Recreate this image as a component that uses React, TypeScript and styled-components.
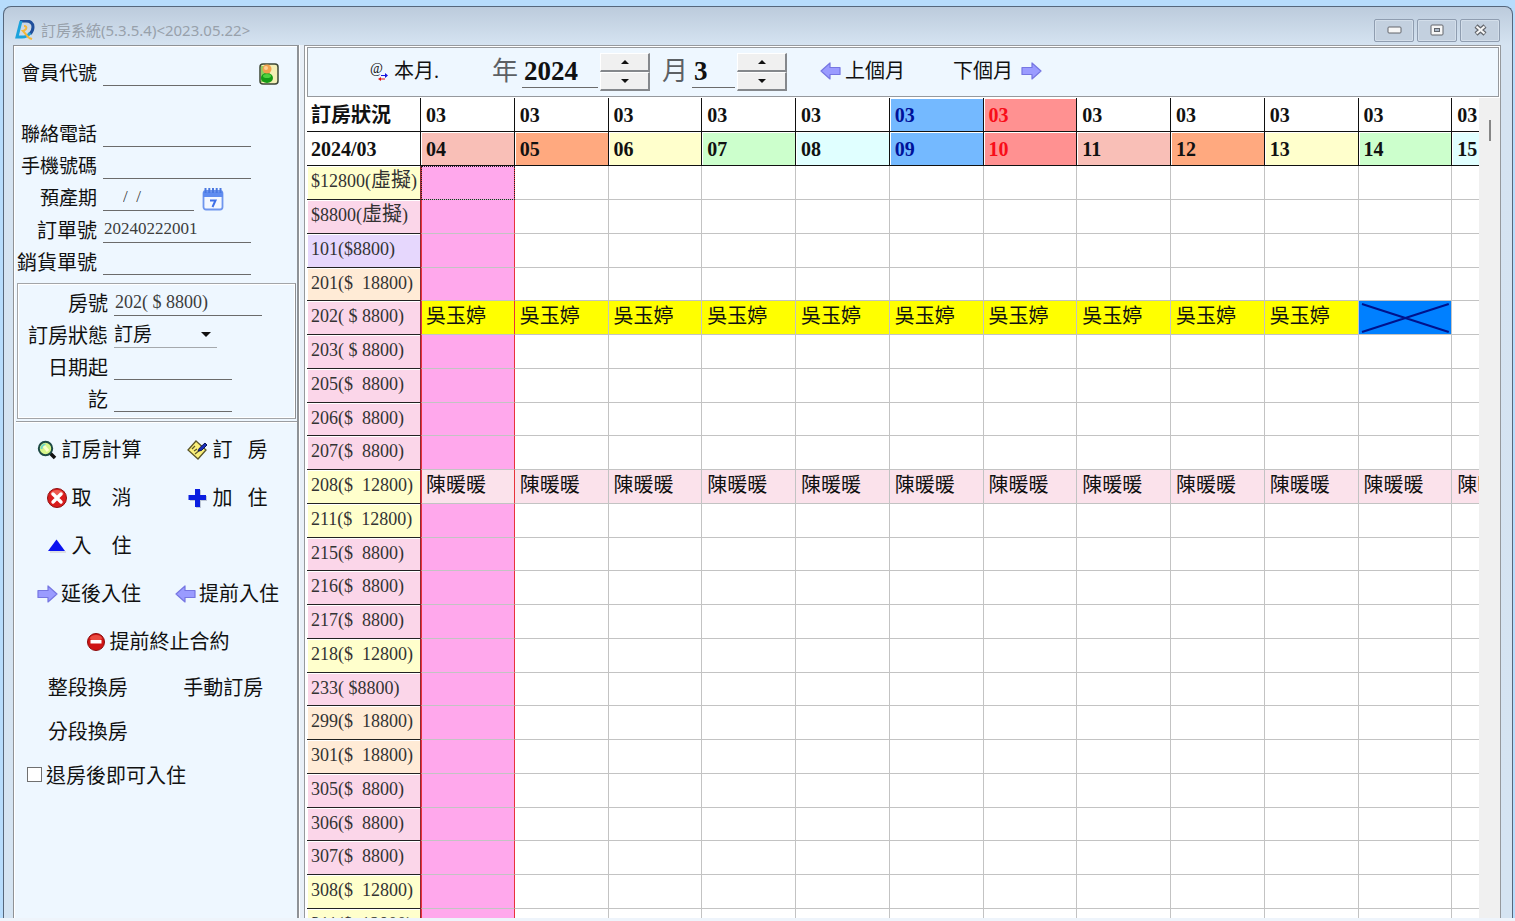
import React from "react";
import styled, { createGlobalStyle, css } from "styled-components";

const SERIF = '"Liberation Serif", "Noto Sans CJK TC", serif';

const GlobalStyle = createGlobalStyle`
  *, *::before, *::after { box-sizing: border-box; }
  body { margin: 0; font-family: ${SERIF}; font-size: 20px; color: #111; }
  button, input, select { font: inherit; color: inherit; margin: 0; padding: 0; border: 0; border-radius: 0; background: none; outline: none; }
  svg { display: block; flex: none; }
`;

/* ---------- window frame ---------- */

const Desktop = styled.div`
  height: 100vh;
  overflow: hidden;
  display: flex;
  flex-direction: column;
  padding: 6px 2px 0 3px;
  background: #b7dcfc;
`;

const Window = styled.main`
  flex: 1;
  min-height: 0;
  display: flex;
  flex-direction: column;
  border: 1px solid #56677c;
  border-bottom: 0;
  border-radius: 8px 8px 0 0;
  background: linear-gradient(#bccbdc 0, #d5e3f1 38px, #d5e4f2 100%);
`;

const BottomStrip = styled.div`
  height: 3px;
  margin: 0 -2px 0 -3px;
  background: #eef4fb;
`;

const TitleBar = styled.header`
  height: 38px;
  flex: none;
  display: flex;
  align-items: center;
  padding: 8px 12px 0 11px;
`;

const Title = styled.h1`
  flex: 1;
  margin: 0 0 0 6px;
  font: 400 15px/20px "Noto Sans", "Noto Sans CJK TC", sans-serif;
  color: #98a1ab;
`;

const WindowControls = styled.div`
  display: flex;
  gap: 3px;
`;

const WindowButton = styled.button`
  width: 40px;
  height: 23px;
  display: flex;
  align-items: center;
  justify-content: center;
  border: 1px solid #8f9db0;
  border-radius: 2px;
  box-shadow: inset 0 0 0 1px #d3deea;
  background: #c3d0df;
`;

const Body = styled.div`
  flex: 1;
  min-height: 0;
  display: flex;
  padding: 0 11px 0 9px;
`;

/* ---------- left form ---------- */

const Sidebar = styled.aside`
  width: 286px;
  flex: none;
  overflow: hidden;
  border: solid #8f9296;
  border-width: 1px 2px 0 1px;
  box-shadow: inset 1px 1px #fff;
  background: #eef7ff;
`;

const Fields = styled.div`
  padding-top: 8px;
`;

const Field = styled.div<{ $spaced?: boolean }>`
  height: 32px;
  display: flex;
  align-items: flex-end;
  gap: 6px;
  margin-bottom: ${(p) => (p.$spaced ? "29px" : "0")};
`;

const FieldLabel = styled.label<{ $width: number; $compact?: boolean }>`
  width: ${(p) => p.$width}px;
  flex: none;
  font-size: ${(p) => (p.$compact ? 19 : 20)}px;
  line-height: 24px;
  text-align: right;
  white-space: nowrap;
`;

const underline = css`
  height: 26px;
  border-bottom: 1px solid #6b6b6b;
`;

const LineInput = styled.input<{ $width: number; $large?: boolean }>`
  ${underline}
  width: ${(p) => p.$width}px;
  padding: 0 1px 1px;
  font-size: ${(p) => (p.$large ? 18 : 17)}px;
  color: #3c3c3c;
`;

const DateInput = styled(LineInput)`
  padding-left: 20px;
  white-space: pre;
`;

const IconButton = styled.button`
  width: 22px;
  height: 24px;
  margin-left: 2px;
  cursor: pointer;
`;

const RoomBox = styled.fieldset`
  margin: 8px 1px 0 3px;
  padding: 0 0 6px;
  min-width: 0;
  border: 1px solid #a3a5a8;
  border-right-color: #8b8e92;
  box-shadow: inset -1px -1px #fff, inset 1px 1px #fff;
`;

const SelectWrap = styled.div`
  ${underline}
  width: 103px;
  display: grid;
  align-items: center;
  border-bottom-color: #a5a9ad;

  > * { grid-area: 1 / 1; }
  > svg { justify-self: end; margin-right: 6px; pointer-events: none; }
`;

const StatusSelect = styled.select`
  width: 100%;
  height: 24px;
  appearance: none;
  font-size: 19px;
  line-height: 24px;
`;

const Divider = styled.hr`
  height: 2px;
  margin: 2px 0 3px 2px;
  border: 0;
  border-top: 1px solid #9a9da1;
  background: #fff;
`;

const ActionGrid = styled.div<{ $rowHeight: number; $inset?: boolean }>`
  display: grid;
  grid-template-columns: 1fr 1fr;
  grid-auto-rows: ${(p) => p.$rowHeight}px;
  padding: 0 ${(p) => (p.$inset ? 6 : 1)}px 0 6px;
  justify-items: center;
  align-items: center;
`;

const ActionButton = styled.button<{ $wide?: boolean; $gap?: number }>`
  display: flex;
  align-items: center;
  gap: ${(p) => p.$gap ?? 5}px;
  grid-column: ${(p) => (p.$wide ? "1 / -1" : "auto")};
  font-size: 20px;
  line-height: 28px;
  white-space: pre;
  cursor: pointer;
`;

const Spacer = styled.span``;

const CheckRow = styled.label`
  height: 40px;
  display: flex;
  align-items: center;
  gap: 4px;
  padding-left: 13px;
  white-space: nowrap;
`;

const CheckBox = styled.input`
  appearance: none;
  width: 15px;
  height: 15px;
  border: 1px solid #707070;
  background: #fff;
  &:checked { background: #3c6fd6; }
`;

/* ---------- schedule ---------- */

const Splitter = styled.div`
  width: 5px;
  flex: none;
  background: linear-gradient(90deg, #fff 1px, #e9f0f8 1px);
`;

const Schedule = styled.section`
  flex: 1;
  min-width: 0;
  display: flex;
  flex-direction: column;
  padding: 1px 0 0 2px;
  border: solid #96999d;
  border-width: 1px 1px 0;
  background: #fff;
`;

const Toolbar = styled.div`
  height: 50px;
  flex: none;
  display: flex;
  align-items: center;
  gap: 48px;
  margin: 0 1px 1px 0;
  padding-left: 62px;
  border: 1px solid #96999d;
  background: #eef7ff;
`;

const ToolCluster = styled.div`
  display: flex;
  align-items: center;
  gap: 33px;
`;

const DatePick = styled.div`
  display: flex;
  align-items: center;
  gap: 12px;
`;

const Stepper = styled.div`
  display: flex;
  align-items: center;
  gap: 2px;
`;

const StepLabel = styled.label`
  width: 28px;
  font-size: 26px;
  line-height: 32px;
  color: #5c6064;
`;

const StepInput = styled.input<{ $width: number }>`
  width: ${(p) => p.$width}px;
  height: 32px;
  padding: 0 2px;
  border-bottom: 1px solid #6b6b6b;
  font-size: 27px;
  font-weight: 700;
  color: #111;
`;

const StepButtons = styled.div`
  width: 50px;
  display: grid;
  grid-auto-rows: 19px;
`;

const StepButton = styled.button`
  display: flex;
  align-items: center;
  justify-content: center;
  border: solid;
  border-width: 1px 2px 2px 1px;
  border-color: #fff #85888c #85888c #fff;
  background: #f0f0f0;
`;

const ToolButton = styled.button<{ $minWidth?: number; $gap?: number }>`
  min-width: ${(p) => p.$minWidth ?? 0}px;
  display: flex;
  align-items: center;
  gap: ${(p) => p.$gap ?? 4}px;
  padding-bottom: 3px;
  font-size: 20px;
  line-height: 28px;
  white-space: nowrap;
  cursor: pointer;
`;

const GridArea = styled.div`
  flex: 1;
  min-height: 0;
  display: flex;
`;

const GridViewport = styled.div`
  flex: 1;
  min-width: 0;
  overflow: hidden;
`;

const ScrollTrack = styled.div`
  width: 21px;
  flex: none;
  padding: 22px 0 0 10px;
  background: #f0f0f0;
`;

const ScrollThumb = styled.div`
  width: 2px;
  height: 21px;
  background: #868686;
`;

const RoomTable = styled.table`
  width: 100%;
  table-layout: fixed;
  border-collapse: separate;
  border-spacing: 0;
  line-height: 26px;
`;

const LabelCol = styled.col`
  width: 114px;
`;

const DayCol = styled.col`
  width: 8%;
`;

const HeadRow = styled.tr`
  height: 34px;
`;

const RoomRow = styled.tr`
  height: 34px;
  &:nth-child(4n) { height: 33px; }
`;

const cellBase = css`
  padding: 0 0 0 5px;
  overflow: hidden;
  text-align: left;
  white-space: pre;
`;

const HeadCell = styled.th<{ $bg?: string; $fg?: string }>`
  ${cellBase}
  border: solid #111;
  border-width: 0 1px 1px 0;
  box-shadow: inset 1px 1px #fff;
  background: ${(p) => p.$bg ?? "#fff"};
  color: ${(p) => p.$fg ?? "#111"};
  font-size: 20px;

  &:first-child { padding-left: 4px; }
  &:last-child { border-right: 0; }
`;

const RoomCell = styled.th<{ $bg: string }>`
  ${cellBase}
  padding: 0 0 3px 4px;
  border: solid #222;
  border-width: 0 1px 1px 0;
  border-right-color: #8a2a36;
  box-shadow: inset 1px 1px #fff;
  background: ${(p) => p.$bg};
  font-size: 18px;
  font-weight: 400;
  color: #333;
`;

const RoomNote = styled.span`
  font-size: 20px;
  line-height: 20px;
`;

const DayCell = styled.td<{ $bg: string; $selected?: boolean; $focused?: boolean; $flush?: boolean }>`
  ${cellBase}
  padding-bottom: 3px;
  border: solid #c3c3c3;
  border-width: 0 1px 1px 0;
  background: ${(p) => p.$bg};
  font-size: 20px;

  ${(p) =>
    p.$selected &&
    css`
      padding-left: 4px;
      border-left: 1px solid #e8323c;
      border-right: 1px solid #e8323c;
    `}
  ${(p) =>
    p.$focused &&
    css`
      outline: 1px dotted #222;
      outline-offset: -1px;
    `}
  ${(p) => p.$flush && "padding: 0;"}
  &:last-child { border-right: 0; }
`;

const BlockedMark = styled.svg`
  width: 100%;
  height: 32px;
`;

/* ---------- icons ---------- */

const Logo = () => (
  <svg width="20" height="20" viewBox="0 0 20 20" fill="none">
    <path d="M5 1h6c4 0 7 2 7 6 0 3-1 5-3 7" stroke="#1f4f9c" strokeWidth="3" />
    <path d="M6 1 2 17h5c3 0 6-1 8-4" stroke="#1ba3dc" strokeWidth="3" />
    <path d="M9 6c2 0 3 1 2 3-1 1-2 2-3 2l6 7" stroke="#f3b83c" strokeWidth="2" />
    <path d="M14 18l3 1" stroke="#f3b83c" strokeWidth="2" />
  </svg>
);

const MemberIcon = () => (
  <svg width="20" height="22" viewBox="0 0 20 22">
    <rect x="1" y="1" width="18" height="20" rx="3" fill="#f3efb4" stroke="#3d4736" strokeWidth="1.5" />
    <path d="M2 3h5v16H2z" fill="#8fcf5c" />
    <ellipse cx="8" cy="15" rx="6" ry="5" fill="#159b15" />
    <ellipse cx="8" cy="13" rx="4" ry="2" fill="#4fd13f" />
    <circle cx="8" cy="6" r="4.5" fill="#f3a04c" />
    <circle cx="7" cy="5" r="2" fill="#fccf94" />
  </svg>
);

const CalendarIcon = () => (
  <svg width="22" height="24" viewBox="0 0 22 24">
    <rect x="1.5" y="4" width="19" height="18.5" rx="2.5" fill="#f4f8ff" stroke="#6f96ee" strokeWidth="1.8" />
    <path d="M1 5h20v5H1z" fill="#5f8cf0" />
    <path d="M3.500 1v5M7.300 1v5M11 1v5M14.700 1v5M18.500 1v5" stroke="#4a78e0" strokeWidth="2" />
    <path d="M8 13.500h5.500L10.500 20" fill="none" stroke="#3f70e8" strokeWidth="2" />
  </svg>
);

const SearchIcon = () => (
  <svg width="20" height="20" viewBox="0 0 20 20">
    <path d="M13 13l5 5" stroke="#111" strokeWidth="3.500" />
    <circle cx="8.500" cy="8.500" r="6.700" fill="#d6f58a" stroke="#1d4a44" strokeWidth="2" />
    <path d="M4.500 9a4.500 4.500 0 0 1 4-4.500" fill="none" stroke="#6fd8c6" strokeWidth="2" />
    <path d="M7 6l4 5" stroke="#fbffc8" strokeWidth="3" />
  </svg>
);

const NoteIcon = () => (
  <svg width="21" height="20" viewBox="0 0 21 20">
    <path d="M9 1l10 9-8 9L1 10z" fill="#fbf07a" stroke="#5b5628" strokeWidth="1.300" />
    <path d="M5 9l3-3M7 11l3-2M8 14l5-4" stroke="#5b5628" strokeWidth="1.200" />
    <path d="M11 11l1.500-3L18 3l2 2-5.500 5.500z" fill="#1a2fb8" stroke="#0b155c" strokeWidth="1" />
  </svg>
);

const CancelIcon = () => (
  <svg width="20" height="20" viewBox="0 0 20 20">
    <circle cx="10" cy="10" r="9.500" fill="#d91c1c" stroke="#8f1010" />
    <ellipse cx="10" cy="5.500" rx="6.500" ry="3.500" fill="#ee5a50" />
    <path d="M6 6l8 8M14 6l-8 8" stroke="#fff" strokeWidth="3.400" strokeLinecap="round" />
  </svg>
);

const PlusIcon = () => (
  <svg width="21" height="20" viewBox="0 0 21 20">
    <path d="M9 2h5v6h6v5h-6v7H9v-7H3V8h6z" fill="#8d97ad" opacity=".5" />
    <path d="M8 1h5v6h6v5h-6v7H8v-7H1.500V7H8z" fill="#0a1ee0" />
  </svg>
);

const TriangleIcon = () => (
  <svg width="20" height="16" viewBox="0 0 20 16">
    <path d="M3 13h16v2H3z" fill="#dcdfe4" />
    <path d="M9.500 1.500L18 13H1z" fill="#0a12f0" />
  </svg>
);

const ArrowIcon = ({ left }: { left?: boolean }) => (
  <svg width="21" height="18" viewBox="0 0 21 18">
    <path
      d={left ? "M1 9l9-8v4.500h10v7H10V17z" : "M20 9l-9-8v4.500H1v7h10V17z"}
      fill="#9a9bff"
      stroke="#7676e2"
      strokeWidth="1.200"
      strokeLinejoin="round"
    />
  </svg>
);

const StopIcon = () => (
  <svg width="18" height="18" viewBox="0 0 18 18">
    <circle cx="9" cy="9" r="8.500" fill="#cf1515" stroke="#8c0c0c" />
    <ellipse cx="9" cy="5" rx="6" ry="3" fill="#ea4a40" />
    <rect x="3.500" y="7" width="11" height="3.500" fill="#fff" />
  </svg>
);

const ThisMonthIcon = () => (
  <svg width="20" height="20" viewBox="0 0 20 20">
    <text x="0" y="12" fontSize="14" fontFamily="Liberation Serif, serif" fill="#111">@</text>
    <path d="M11 14h4v-2l3 2.500-3 2.500v-2h-4z" fill="#1414e0" />
    <path d="M15 17.500h-4V16l-3 2 3 2v-1.500h4z" fill="#e01414" />
  </svg>
);

const CaretIcon = ({ up, size = 8 }: { up?: boolean; size?: number }) => (
  <svg width={size} height={size / 2} viewBox="0 0 8 4">
    <path d={up ? "M0 4h8L4 0z" : "M0 0h8L4 4z"} fill="#111" />
  </svg>
);

const MinimizeIcon = () => (
  <svg width="15" height="8" viewBox="0 0 15 8">
    <rect x="1" y="1" width="13" height="6" rx="1" fill="#f6f6f6" stroke="#62656b" />
  </svg>
);

const MaximizeIcon = () => (
  <svg width="14" height="12" viewBox="0 0 14 12">
    <rect x="1" y="1" width="12" height="10" rx="1" fill="#f6f6f6" stroke="#62656b" />
    <rect x="4.500" y="4.500" width="5" height="3" fill="#aab7c7" stroke="#62656b" />
  </svg>
);

const CloseIcon = () => (
  <svg width="15" height="12" viewBox="0 0 15 12">
    <path d="M3 2l9 8M12 2l-9 8" stroke="#62656b" strokeWidth="4.500" />
    <path d="M3.500 2.500l8 7M11.500 2.500l-8 7" stroke="#f6f6f6" strokeWidth="2.200" />
  </svg>
);

/* ---------- data ---------- */

type Tone = "yellow" | "pink" | "lavender" | "peach";

const TONES: Record<Tone, string> = {
  yellow: "#ffffcc",
  pink: "#fbd6e9",
  lavender: "#e6d7fd",
  peach: "#ffebd6",
};

const DAYS = [
  { day: "04", bg: "#f9bfb7" },
  { day: "05", bg: "#ffa97f" },
  { day: "06", bg: "#ffffcc" },
  { day: "07", bg: "#ccffcc" },
  { day: "08", bg: "#e0ffff" },
  { day: "09", bg: "#74b9ff", top: "#74b9ff", fg: "#00129a" },
  { day: "10", bg: "#ff9191", top: "#ff9191", fg: "#f80d18" },
  { day: "11", bg: "#f9bfb7" },
  { day: "12", bg: "#ffa97f" },
  { day: "13", bg: "#ffffcc" },
  { day: "14", bg: "#ccffcc" },
  { day: "15", bg: "#e0ffff" },
];

interface Room {
  label: string;
  note?: string;
  tone: Tone;
  guest?: string;
  guestBg?: string;
  nights?: number;
  blocked?: number;
}

const ROOMS: Room[] = [
  { label: "$12800", note: "虛擬", tone: "yellow" },
  { label: "$8800", note: "虛擬", tone: "pink" },
  { label: "101($8800)", tone: "lavender" },
  { label: "201($  18800)", tone: "peach" },
  { label: "202( $ 8800)", tone: "pink", guest: "吳玉婷", guestBg: "#ffff00", nights: 10, blocked: 10 },
  { label: "203( $ 8800)", tone: "pink" },
  { label: "205($  8800)", tone: "pink" },
  { label: "206($  8800)", tone: "pink" },
  { label: "207($  8800)", tone: "pink" },
  { label: "208($  12800)", tone: "yellow", guest: "陳暖暖", guestBg: "#fbe2eb", nights: 12 },
  { label: "211($  12800)", tone: "yellow" },
  { label: "215($  8800)", tone: "pink" },
  { label: "216($  8800)", tone: "pink" },
  { label: "217($  8800)", tone: "pink" },
  { label: "218($  12800)", tone: "yellow" },
  { label: "233( $8800)", tone: "pink" },
  { label: "299($  18800)", tone: "peach" },
  { label: "301($  18800)", tone: "peach" },
  { label: "305($  8800)", tone: "pink" },
  { label: "306($  8800)", tone: "pink" },
  { label: "307($  8800)", tone: "pink" },
  { label: "308($  12800)", tone: "yellow" },
  { label: "311($  12800)", tone: "yellow" },
];

/* ---------- parts ---------- */

const Spin = ({ id, label, value, width }: { id: string; label: string; value: string; width: number }) => (
  <Stepper>
    <StepLabel htmlFor={id}>{label}</StepLabel>
    <StepInput id={id} defaultValue={value} $width={width} />
    <StepButtons>
      <StepButton type="button" aria-label={`${label} +`}><CaretIcon up /></StepButton>
      <StepButton type="button" aria-label={`${label} -`}><CaretIcon /></StepButton>
    </StepButtons>
  </Stepper>
);

const BookingForm = () => (
  <Sidebar>
    <Fields>
      <Field $spaced>
        <FieldLabel htmlFor="member" $width={83} $compact>會員代號</FieldLabel>
        <LineInput id="member" $width={148} />
        <IconButton type="button" aria-label="會員"><MemberIcon /></IconButton>
      </Field>
      <Field>
        <FieldLabel htmlFor="phone" $width={83} $compact>聯絡電話</FieldLabel>
        <LineInput id="phone" $width={148} />
      </Field>
      <Field>
        <FieldLabel htmlFor="mobile" $width={83} $compact>手機號碼</FieldLabel>
        <LineInput id="mobile" $width={148} />
      </Field>
      <Field>
        <FieldLabel htmlFor="due" $width={83} $compact>預產期</FieldLabel>
        <DateInput id="due" $width={91} defaultValue="/  /" />
        <IconButton type="button" aria-label="日曆"><CalendarIcon /></IconButton>
      </Field>
      <Field>
        <FieldLabel htmlFor="order" $width={83}>訂單號</FieldLabel>
        <LineInput id="order" $width={148} defaultValue="20240222001" />
      </Field>
      <Field>
        <FieldLabel htmlFor="sales" $width={83}>銷貨單號</FieldLabel>
        <LineInput id="sales" $width={148} />
      </Field>
    </Fields>

    <RoomBox>
      <Field>
        <FieldLabel htmlFor="room" $width={90}>房號</FieldLabel>
        <LineInput id="room" $width={148} $large defaultValue="202( $ 8800)" />
      </Field>
      <Field>
        <FieldLabel htmlFor="status" $width={90}>訂房狀態</FieldLabel>
        <SelectWrap>
          <StatusSelect id="status" defaultValue="訂房">
            <option>訂房</option>
          </StatusSelect>
          <CaretIcon size={10} />
        </SelectWrap>
      </Field>
      <Field>
        <FieldLabel htmlFor="from" $width={90}>日期起</FieldLabel>
        <LineInput id="from" $width={118} />
      </Field>
      <Field>
        <FieldLabel htmlFor="to" $width={90}>訖</FieldLabel>
        <LineInput id="to" $width={118} />
      </Field>
    </RoomBox>

    <Divider />

    <ActionGrid $rowHeight={48}>
      <ActionButton type="button"><SearchIcon />訂房計算</ActionButton>
      <ActionButton type="button"><NoteIcon />{"訂   房"}</ActionButton>
      <ActionButton type="button"><CancelIcon />{"取    消"}</ActionButton>
      <ActionButton type="button"><PlusIcon />{"加   住"}</ActionButton>
      <ActionButton type="button"><TriangleIcon />{"入    住"}</ActionButton>
      <Spacer />
      <ActionButton type="button" $gap={3}><ArrowIcon />延後入住</ActionButton>
      <ActionButton type="button" $gap={3}><ArrowIcon left />提前入住</ActionButton>
      <ActionButton type="button" $wide><StopIcon />提前終止合約</ActionButton>
    </ActionGrid>
    <ActionGrid $rowHeight={44} $inset>
      <ActionButton type="button">整段換房</ActionButton>
      <ActionButton type="button">手動訂房</ActionButton>
      <ActionButton type="button">分段換房</ActionButton>
    </ActionGrid>
    <CheckRow>
      <CheckBox type="checkbox" />
      退房後即可入住
    </CheckRow>
  </Sidebar>
);

const RoomCells = ({ room, first }: { room: Room; first: boolean }) => (
  <>
    {DAYS.map(({ day }, i) => {
      const booked = room.guest !== undefined && i < (room.nights ?? 0);
      if (room.blocked === i) {
        return (
          <DayCell key={day} $bg="#0080ff" $flush>
            <BlockedMark viewBox="0 0 93 32" preserveAspectRatio="none">
              <path d="M3 2l87 28M90 2L3 30" stroke="#00128c" strokeWidth="2" />
            </BlockedMark>
          </DayCell>
        );
      }
      return (
        <DayCell
          key={day}
          $bg={booked ? room.guestBg ?? "#fff" : i === 0 ? "#ffa8ec" : "#fff"}
          $selected={i === 0}
          $focused={first && i === 0}
        >
          {booked ? room.guest : ""}
        </DayCell>
      );
    })}
  </>
);

const RoomSchedule = () => (
  <RoomTable>
    <colgroup>
      <LabelCol />
      {DAYS.slice(0, -1).map((d) => <DayCol key={d.day} />)}
      <col />
    </colgroup>
    <thead>
      <HeadRow>
        <HeadCell>訂房狀況</HeadCell>
        {DAYS.map((d) => <HeadCell key={d.day} $bg={d.top} $fg={d.fg}>03</HeadCell>)}
      </HeadRow>
      <HeadRow>
        <HeadCell>2024/03</HeadCell>
        {DAYS.map((d) => <HeadCell key={d.day} $bg={d.bg} $fg={d.fg}>{d.day}</HeadCell>)}
      </HeadRow>
    </thead>
    <tbody>
      {ROOMS.map((room, r) => (
        <RoomRow key={r}>
          <RoomCell scope="row" $bg={TONES[room.tone]}>
            {room.label}
            {room.note && <>(<RoomNote>{room.note}</RoomNote>)</>}
          </RoomCell>
          <RoomCells room={room} first={r === 0} />
        </RoomRow>
      ))}
    </tbody>
  </RoomTable>
);

export default function App() {
  return (
    <>
      <GlobalStyle />
      <Desktop>
        <Window>
          <TitleBar>
            <Logo />
            <Title>訂房系統(5.3.5.4)&lt;2023.05.22&gt;</Title>
            <WindowControls>
              <WindowButton type="button" aria-label="最小化"><MinimizeIcon /></WindowButton>
              <WindowButton type="button" aria-label="最大化"><MaximizeIcon /></WindowButton>
              <WindowButton type="button" aria-label="關閉"><CloseIcon /></WindowButton>
            </WindowControls>
          </TitleBar>
          <Body>
            <BookingForm />
            <Splitter />
            <Schedule>
              <Toolbar>
                <ToolButton type="button" $minWidth={74}><ThisMonthIcon />本月.</ToolButton>
                <ToolCluster>
                  <DatePick>
                    <Spin id="year" label="年" value="2024" width={76} />
                    <Spin id="month" label="月" value="3" width={43} />
                  </DatePick>
                  <ToolButton type="button"><ArrowIcon left />上個月</ToolButton>
                </ToolCluster>
                <ToolButton type="button" $gap={8}>下個月<ArrowIcon /></ToolButton>
              </Toolbar>
              <GridArea>
                <GridViewport><RoomSchedule /></GridViewport>
                <ScrollTrack><ScrollThumb /></ScrollTrack>
              </GridArea>
            </Schedule>
          </Body>
        </Window>
        <BottomStrip />
      </Desktop>
    </>
  );
}
